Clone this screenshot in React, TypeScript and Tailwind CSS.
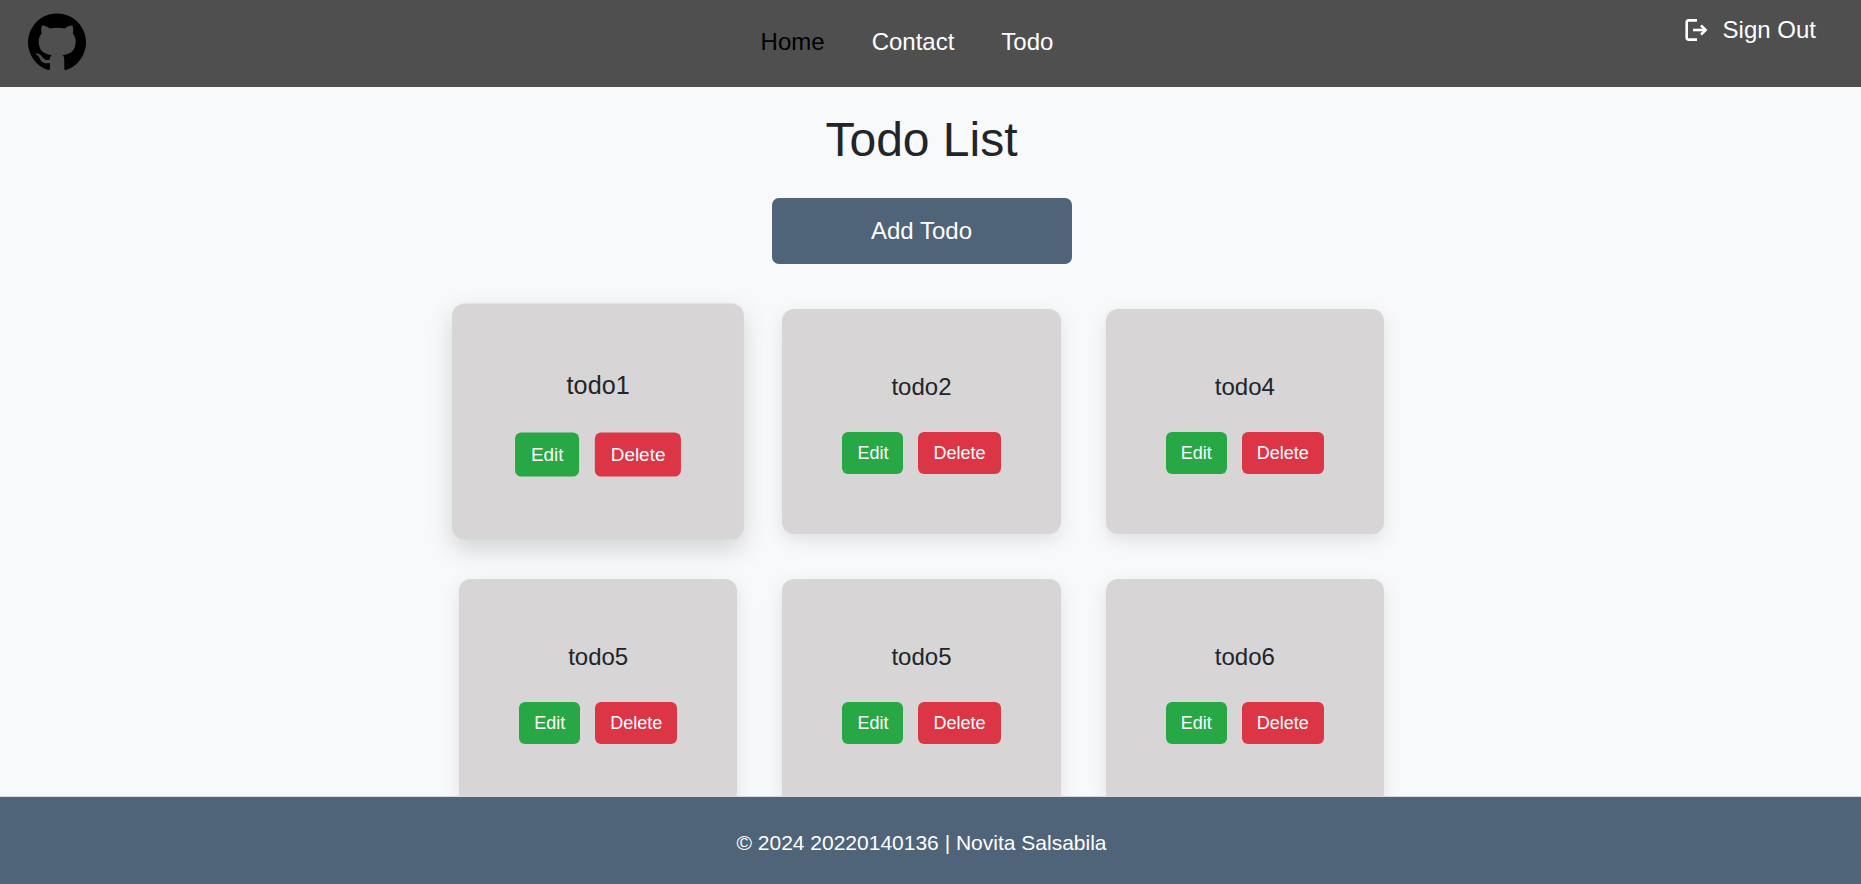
import React from "react";

type Todo = { id: number; title: string; active?: boolean };

const todos: Todo[] = [
  { id: 1, title: "todo1", active: true },
  { id: 2, title: "todo2" },
  { id: 3, title: "todo4" },
  { id: 4, title: "todo5" },
  { id: 5, title: "todo5" },
  { id: 6, title: "todo6" },
];

function GithubMark() {
  return (
    <svg viewBox="0 0 58 58" className="size-[58px]" fill="currentColor" aria-hidden="true">
      <path d="M20 57A29 29 0 1 1 38 57Q36.3 57.4 36.3 55.8V48C36.3 45.2 36 43.2 34.6 42C41.5 41.2 47.7 38.4 47.7 28.2C47.7 25 46.6 22.6 44.8 20.4C45.3 18.6 45.5 15.8 44.5 12.6C42.2 12.3 39.6 13.6 36.5 15.6C32 14.4 26.4 14.4 21.9 15.6C18.8 13.6 16.2 12.3 13.9 12.6C12.9 15.8 13.1 18.6 13.6 20.4C11.8 22.6 10.7 25 10.7 28.2C10.7 38.4 16.9 41.2 23.8 42C22.7 42.8 22 44.6 21.8 46.5C19.6 47.5 16.6 47.3 14.6 44.6C13.3 42.6 11.6 40.6 8.2 40.6C7.2 40.9 8.2 41.6 9 42C10.6 43 11.3 44.6 12.2 46.4C13.8 49.6 17.6 50.8 22 50.1V55.8Q22 57.4 20 57Z" />
    </svg>
  );
}

function SignOutIcon() {
  return (
    <svg
      viewBox="0 0 24 24"
      className="size-6"
      fill="none"
      stroke="currentColor"
      strokeWidth="2.6"
      aria-hidden="true"
    >
      <path d="M13 2.4H4.2A1.5 1.5 0 0 0 2.7 3.9v16.2a1.5 1.5 0 0 0 1.5 1.5H13" />
      <path d="M9 12h12.5" />
      <path d="M17 7.4l4.6 4.6-4.6 4.6" />
    </svg>
  );
}

function Header() {
  return (
    <header className="grid grid-cols-[1fr_auto_1fr] items-center bg-[#4f4f4f] pt-3 pb-[15px] pr-[45px] pl-7 text-2xl leading-9 text-white">
      <a href="#" aria-label="GitHub" className="flex h-[60px] w-[58px] items-center text-black">
        <GithubMark />
      </a>
      <nav className="flex gap-[47px] pr-[30px]">
        <a href="#" className="text-black">Home</a>
        <a href="#">Contact</a>
        <a href="#">Todo</a>
      </nav>
      <button type="button" className="flex items-center gap-[15px] self-start justify-self-end">
        <SignOutIcon />
        Sign Out
      </button>
    </header>
  );
}

function TodoCard({ todo }: { todo: Todo }) {
  return (
    <li
      className={
        todo.active
          ? "flex scale-105 flex-col items-center gap-[27px] rounded-xl bg-[#d7d5d6] py-[60px] shadow-[0_9px_23px_rgba(0,0,0,0.15)]"
          : "flex flex-col items-center gap-[27px] rounded-xl bg-[#d7d5d6] py-[60px] shadow-[0_6px_18px_rgba(0,0,0,0.1)]"
      }
    >
      <h2 className="text-2xl leading-9">{todo.title}</h2>
      <div className="flex gap-[15px] text-lg leading-[26px] text-white">
        <button type="button" className="rounded-md bg-[#28a745] px-[15px] py-2">Edit</button>
        <button type="button" className="rounded-md bg-[#dc3545] px-[15px] py-2">Delete</button>
      </div>
    </li>
  );
}

export default function App() {
  return (
    <div className="flex h-screen flex-col bg-[#f8f9fb] font-['Liberation_Sans',Arial,sans-serif] text-[#212529]">
      <Header />
      <main className="flex min-h-0 flex-1 flex-col items-center overflow-y-auto pt-6 pr-[18px] [scrollbar-width:none]">
        <h1 className="text-5xl leading-[58px]">Todo List</h1>
        <button
          type="button"
          className="mt-[29px] w-[300px] shrink-0 rounded-[7px] bg-[#4f6379] py-[15px] text-2xl leading-9 text-white"
        >
          Add Todo
        </button>
        <ul className="grid w-full max-w-[925px] grid-cols-3 gap-[45px] py-[45px]">
          {todos.map((todo) => (
            <TodoCard key={todo.id} todo={todo} />
          ))}
        </ul>
      </main>
      <footer className="border-t border-[#dcdbdc] bg-[#4f6379] pt-8 pr-[18px] pb-7 text-center text-[21px] leading-[27px] text-white">
        © 2024 20220140136 | Novita Salsabila
      </footer>
    </div>
  );
}
